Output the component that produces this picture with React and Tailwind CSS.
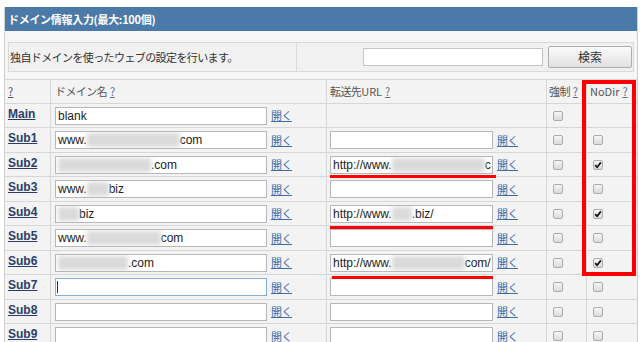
import React from "react";

const JP = "font-['Noto_Sans_CJK_JP',sans-serif]";
const LAT = "font-['Liberation_Sans',Arial,sans-serif]";

const rows = [
  { label: "Main", d: ["blank"], u: null, force: false, nodir: null, h: 24 },
  { label: "Sub1", d: ["www.", 93, "com"], u: [], force: false, nodir: false, h: 25 },
  { label: "Sub2", d: [93, ".com"], u: ["http://www.", 93, "c"], force: false, nodir: true, h: 24 },
  { label: "Sub3", d: ["www.", 22, "biz"], u: [], force: false, nodir: false, h: 25 },
  { label: "Sub4", d: [21, "biz"], u: ["http://www.", 20, ".biz/"], force: false, nodir: true, h: 24 },
  { label: "Sub5", d: ["www.", 74, "com"], u: [], force: false, nodir: false, h: 25 },
  { label: "Sub6", d: [70, ".com"], u: ["http://www.", 73, "com/"], force: false, nodir: true, h: 24 },
  { label: "Sub7", d: [], u: [], force: false, nodir: false, h: 25, focus: true },
  { label: "Sub8", d: [], u: [], force: false, nodir: false, h: 24 },
  { label: "Sub9", d: [], u: [], force: false, nodir: false, h: 25 },
];

function Parts({ parts }) {
  return parts.map((p, i) =>
    typeof p === "number" ? (
      <span
        key={i}
        className="inline-block h-[14px] shrink-0 bg-[#dadada] blur-[2px]"
        style={{ width: p }}
      />
    ) : (
      <span key={i} className="shrink-0">{p}</span>
    )
  );
}

function Field({ parts, wide, focus }) {
  return (
    <div
      className={`relative flex h-[18px] shrink-0 items-center overflow-hidden whitespace-nowrap border bg-white pl-[2px] text-[12px] text-[#222] ${LAT} ${
        wide ? "w-[212px]" : "w-[163px]"
      } ${focus ? "border-[#86aedb]" : "border-[#b7b7b7]"}`}
    >
      <Parts parts={parts} />
      {focus && <span className="absolute left-[1px] top-[2px] h-[12px] w-px bg-[#333]" />}
    </div>
  );
}

function Open() {
  return (
    <span className={`ml-[4px] text-[11px] leading-none tracking-[-0.5px] text-[#3d6da6] underline ${JP}`}>
      開く
    </span>
  );
}

function Check({ checked }) {
  return (
    <span className="flex h-[10px] w-[10px] items-center justify-center rounded-[2px] border border-[#acacac] bg-gradient-to-b from-[#f6f6f6] to-[#dadada]">
      {checked && (
        <svg width="8" height="8" viewBox="0 0 8 8">
          <path d="M1.2 4.2 L3.1 6.2 L6.9 1.4" fill="none" stroke="#111" strokeWidth="1.7" />
        </svg>
      )}
    </span>
  );
}

export default function App() {
  return (
    <div className="relative h-[342px] w-[640px] overflow-hidden bg-white pt-[7px]">
      <div className="ml-[4px] w-[634px] border-x border-[#cfcfcf] bg-[#f6f6f6]">
        <div className={`flex h-[24px] items-center bg-[#4b79a8] pl-[3px] text-[11px] font-bold tracking-[-0.3px] text-white ${JP}`}>
          ドメイン情報入力(最大:100個)
        </div>

        <div className="mx-[3px] mt-[11px] flex h-[30px] border border-[#d9d9d9] bg-[#f1f1f1]">
          <div className={`flex w-[288px] items-center border-r border-[#d9d9d9] pl-[1px] text-[11px] tracking-[-0.6px] text-[#333] ${JP}`}>
            独自ドメインを使ったウェブの設定を行います。
          </div>
          <div className="flex flex-1 items-center justify-end gap-[5px] pr-[1px]">
            <div className="h-[18px] w-[180px] border border-[#c4c4c4] bg-white" />
            <div className={`flex h-[22px] w-[84px] items-center justify-center rounded-[2px] border border-[#adadad] bg-gradient-to-b from-[#fbfbfb] to-[#e1e1e1] text-[12px] text-[#333] ${JP}`}>
              検索
            </div>
          </div>
        </div>

        <div className="mt-[7px] border-t border-[#d6d6d6] bg-[#f3f3f3]">
          <div className={`flex h-[24px] border-b border-[#d6d6d6] text-[11px] text-[#555] ${JP}`}>
            <div className="flex w-[46px] items-center border-r border-[#d6d6d6] pl-[3px]">
              <span className="underline">?</span>
            </div>
            <div className="flex w-[276px] items-center border-r border-[#d6d6d6] pl-[4px] tracking-[-0.6px]">
              ドメイン名 <span className="ml-[3px] text-[#57708f] underline">?</span>
            </div>
            <div className="flex w-[220px] items-center border-r border-[#d6d6d6] pl-[3px]">
              <span className="tracking-[-0.6px]">転送先</span>URL <span className="ml-[3px] text-[#57708f] underline">?</span>
            </div>
            <div className="flex w-[40px] items-center border-r border-[#d6d6d6] pl-[2px]">
              <span className="tracking-[-0.6px]">強制</span> <span className="ml-[3px] text-[#57708f] underline">?</span>
            </div>
            <div className="flex flex-1 items-center pl-[3px]">
              NoDir <span className="ml-[3px] text-[#57708f] underline">?</span>
            </div>
          </div>

          {rows.map((r) => (
            <div
              key={r.label}
              className={`flex border-b border-[#d6d6d6] ${r.h === 24 ? "h-[24px]" : "h-[25px]"}`}
            >
              <div className={`w-[46px] border-r border-[#d6d6d6] pl-[3px] pt-[3px] text-[12px] font-bold leading-[14px] text-[#2b3e6a] underline ${LAT}`}>
                {r.label}
              </div>
              <div className="flex w-[276px] items-center border-r border-[#d6d6d6] pl-[4px]">
                <Field parts={r.d} wide focus={r.focus} />
                <Open />
              </div>
              <div className="flex w-[220px] items-center border-r border-[#d6d6d6] pl-[3px]">
                {r.u && (
                  <>
                    <Field parts={r.u} />
                    <Open />
                  </>
                )}
              </div>
              <div className="flex w-[40px] items-center border-r border-[#d6d6d6] pl-[6px]">
                <Check checked={r.force} />
              </div>
              <div className="flex flex-1 items-center pl-[6px]">
                {r.nodir !== null && <Check checked={r.nodir} />}
              </div>
            </div>
          ))}
        </div>
      </div>

      {/* annotations */}
      <div className="absolute left-[330px] top-[175px] h-[3px] w-[166px] bg-[#ff0000]" />
      <div className="absolute left-[330px] top-[226px] h-[3px] w-[163px] bg-[#ff0000]" />
      <div className="absolute left-[332px] top-[276px] h-[3px] w-[161px] bg-[#ff0000]" />
      <div className="absolute left-[582px] top-[80px] h-[196px] w-[54px] border-[4px] border-[#ff0000]" />
    </div>
  );
}
